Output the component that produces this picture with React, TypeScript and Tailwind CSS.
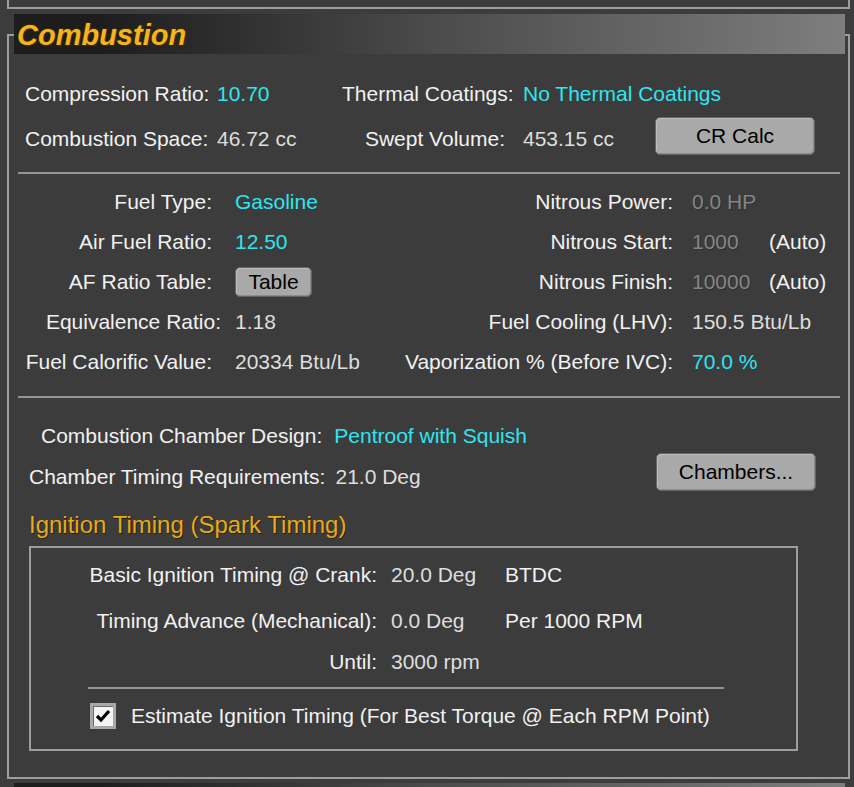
import type { ReactNode } from 'react';

const cyan = 'text-[#31e4ee]';

function Btn({ children, className }: { children: ReactNode; className: string }) {
  return (
    <div
      className={`flex items-center justify-center rounded-[5px] border border-[#666666] bg-[#a9a9a9] text-black shadow-[inset_1px_1px_0_#bdbdbd,inset_-1px_-1px_0_#8c8c8c] ${className}`}
    >
      {children}
    </div>
  );
}

function FuelRow({
  label,
  value,
  label2,
  value2,
  extra,
  wide,
}: {
  label: string;
  value: ReactNode;
  label2: string;
  value2: ReactNode;
  extra?: string;
  wide?: boolean;
}) {
  return (
    <div className="flex h-[40px] items-center whitespace-nowrap">
      <div className={`flex w-[212px] justify-end ${wide ? 'pr-0' : 'pr-[9px]'}`}>{label}</div>
      <div className="ml-[14px] w-[175px]">{value}</div>
      <div className="flex w-[263px] justify-end">{label2}</div>
      <div className="ml-[19px] w-[77px]">{value2}</div>
      {extra && <div>{extra}</div>}
    </div>
  );
}

const dim = 'text-[#858585] [text-shadow:1px_1px_0_#2e2e2e]';

export default function App() {
  return (
    <div className="h-[787px] w-[854px] overflow-hidden bg-[#3c3c3c] font-['Liberation_Sans',Arial,sans-serif] text-[21px] text-[#f1f1f1]">
      <div className="ml-[7px] h-[9px] w-[843px] border-x-2 border-b-2 border-[#9d9d9d]" />

      <div className="ml-[7px] mt-[25px] h-[745px] w-[843px] border-2 border-[#9d9d9d]">
        <div className="-mt-[22px] ml-[5px] flex h-[40px] w-[831px] items-center bg-gradient-to-r from-[#1d1d1d] from-10% via-[#4b4b4b] via-50% to-[#7e7e7e] pl-[3px] pt-[3px]">
          <span className="text-[29px] font-bold italic text-[#f3b41f] [text-shadow:1px_1px_0_#3a2a00,-1px_0_0_#3a2a00,0_-1px_0_#3a2a00]">
            Combustion
          </span>
        </div>

        <div className="mt-[25px] flex h-[30px] items-center whitespace-nowrap pl-[16px]">
          <div className="w-[192px]">Compression Ratio:</div>
          <div className={`w-[125px] ${cyan}`}>10.70</div>
          <div className="w-[181px] pr-[14px] text-right">Thermal Coatings:</div>
          <div className={cyan}>No Thermal Coatings</div>
        </div>
        <div className="mt-[8px] flex h-[38px] items-center whitespace-nowrap pl-[16px]">
          <div className="w-[192px] pt-[6px]">Combustion Space:</div>
          <div className="w-[125px] pt-[6px] text-[#dedede]">46.72 cc</div>
          <div className="w-[181px] pr-[18px] pt-[6px] text-right">Swept Volume:</div>
          <div className="w-[132px] pt-[6px] text-[#dedede]">453.15 cc</div>
          <Btn className="h-[38px] w-[160px]">CR Calc</Btn>
        </div>

        <div className="ml-[9px] mt-[17px] h-[2px] w-[822px] bg-[#969696]" />

        <div className="mt-[8px]">
          <FuelRow label="Fuel Type:" value={<span className={cyan}>Gasoline</span>} label2="Nitrous Power:" value2={<span className={dim}>0.0 HP</span>} />
          <FuelRow label="Air Fuel Ratio:" value={<span className={cyan}>12.50</span>} label2="Nitrous Start:" value2={<span className={dim}>1000</span>} extra="(Auto)" />
          <FuelRow
            label="AF Ratio Table:"
            value={<Btn className="h-[30px] w-[77px]">Table</Btn>}
            label2="Nitrous Finish:"
            value2={<span className={dim}>10000</span>}
            extra="(Auto)"
          />
          <FuelRow label="Equivalence Ratio:" wide value={<span className="text-[#dedede]">1.18</span>} label2="Fuel Cooling (LHV):" value2={<span className="whitespace-nowrap text-[#dedede]">150.5 Btu/Lb</span>} />
          <FuelRow label="Fuel Calorific Value:" value={<span className="text-[#dedede]">20334 Btu/Lb</span>} label2="Vaporization % (Before IVC):" value2={<span className={cyan}>70.0 %</span>} />
        </div>

        <div className="ml-[9px] mt-[14px] h-[2px] w-[822px] bg-[#969696]" />

        <div className="mt-[23px] flex h-[30px] items-center whitespace-nowrap pl-[32px]">
          <span>Combustion Chamber Design:</span>
          <span className={`ml-[12px] ${cyan}`}>Pentroof with Squish</span>
        </div>
        <div className="mt-[2px] flex h-[38px] items-center whitespace-nowrap pl-[20px] pr-[32px]">
          <span className="pt-[10px]">Chamber Timing Requirements:</span>
          <span className="ml-[10px] pt-[10px] text-[#dedede]">21.0 Deg</span>
          <Btn className="ml-auto h-[38px] w-[160px]">Chambers...</Btn>
        </div>

        <div className="ml-[20px] mt-[19px] flex h-[30px] items-center text-[24px] text-[#e6aa1f] [text-shadow:1px_1px_0_#2a2000]">
          Ignition Timing (Spark Timing)
        </div>

        <div className="ml-[20px] mt-[6px] h-[205px] w-[769px] border-2 border-[#9d9d9d]">
          <div className="mt-[12px] flex h-[30px] items-center whitespace-nowrap">
            <div className="w-[346px] text-right">Basic Ignition Timing @ Crank:</div>
            <div className="ml-[14px] w-[114px] text-[#dedede]">20.0 Deg</div>
            <div>BTDC</div>
          </div>
          <div className="mt-[16px] flex h-[30px] items-center whitespace-nowrap">
            <div className="w-[346px] text-right">Timing Advance (Mechanical):</div>
            <div className="ml-[14px] w-[114px] text-[#dedede]">0.0 Deg</div>
            <div>Per 1000 RPM</div>
          </div>
          <div className="mt-[11px] flex h-[30px] items-center whitespace-nowrap">
            <div className="w-[346px] text-right">Until:</div>
            <div className="ml-[14px] text-[#dedede]">3000 rpm</div>
          </div>
          <div className="ml-[57px] mt-[10px] h-[2px] w-[636px] bg-[#969696]" />
          <div className="ml-[59px] mt-[14px] flex h-[26px] items-center whitespace-nowrap">
            <div className="flex h-[26px] w-[26px] items-center justify-center border-[3px] border-[#a8a8a8] bg-[#f4f4f4] shadow-[inset_1px_1px_0_#6a6a6a]">
              <svg width="16" height="14" viewBox="0 0 16 14">
                <path d="M2 7 L6 11 L14 2" fill="none" stroke="#000" strokeWidth="3.2" />
              </svg>
            </div>
            <span className="ml-[15px]">Estimate Ignition Timing (For Best Torque @ Each RPM Point)</span>
          </div>
        </div>
      </div>

      <div className="ml-[14px] mt-[4px] h-[40px] w-[831px] bg-gradient-to-r from-[#1d1d1d] from-10% via-[#4b4b4b] via-50% to-[#7e7e7e]" />
    </div>
  );
}
